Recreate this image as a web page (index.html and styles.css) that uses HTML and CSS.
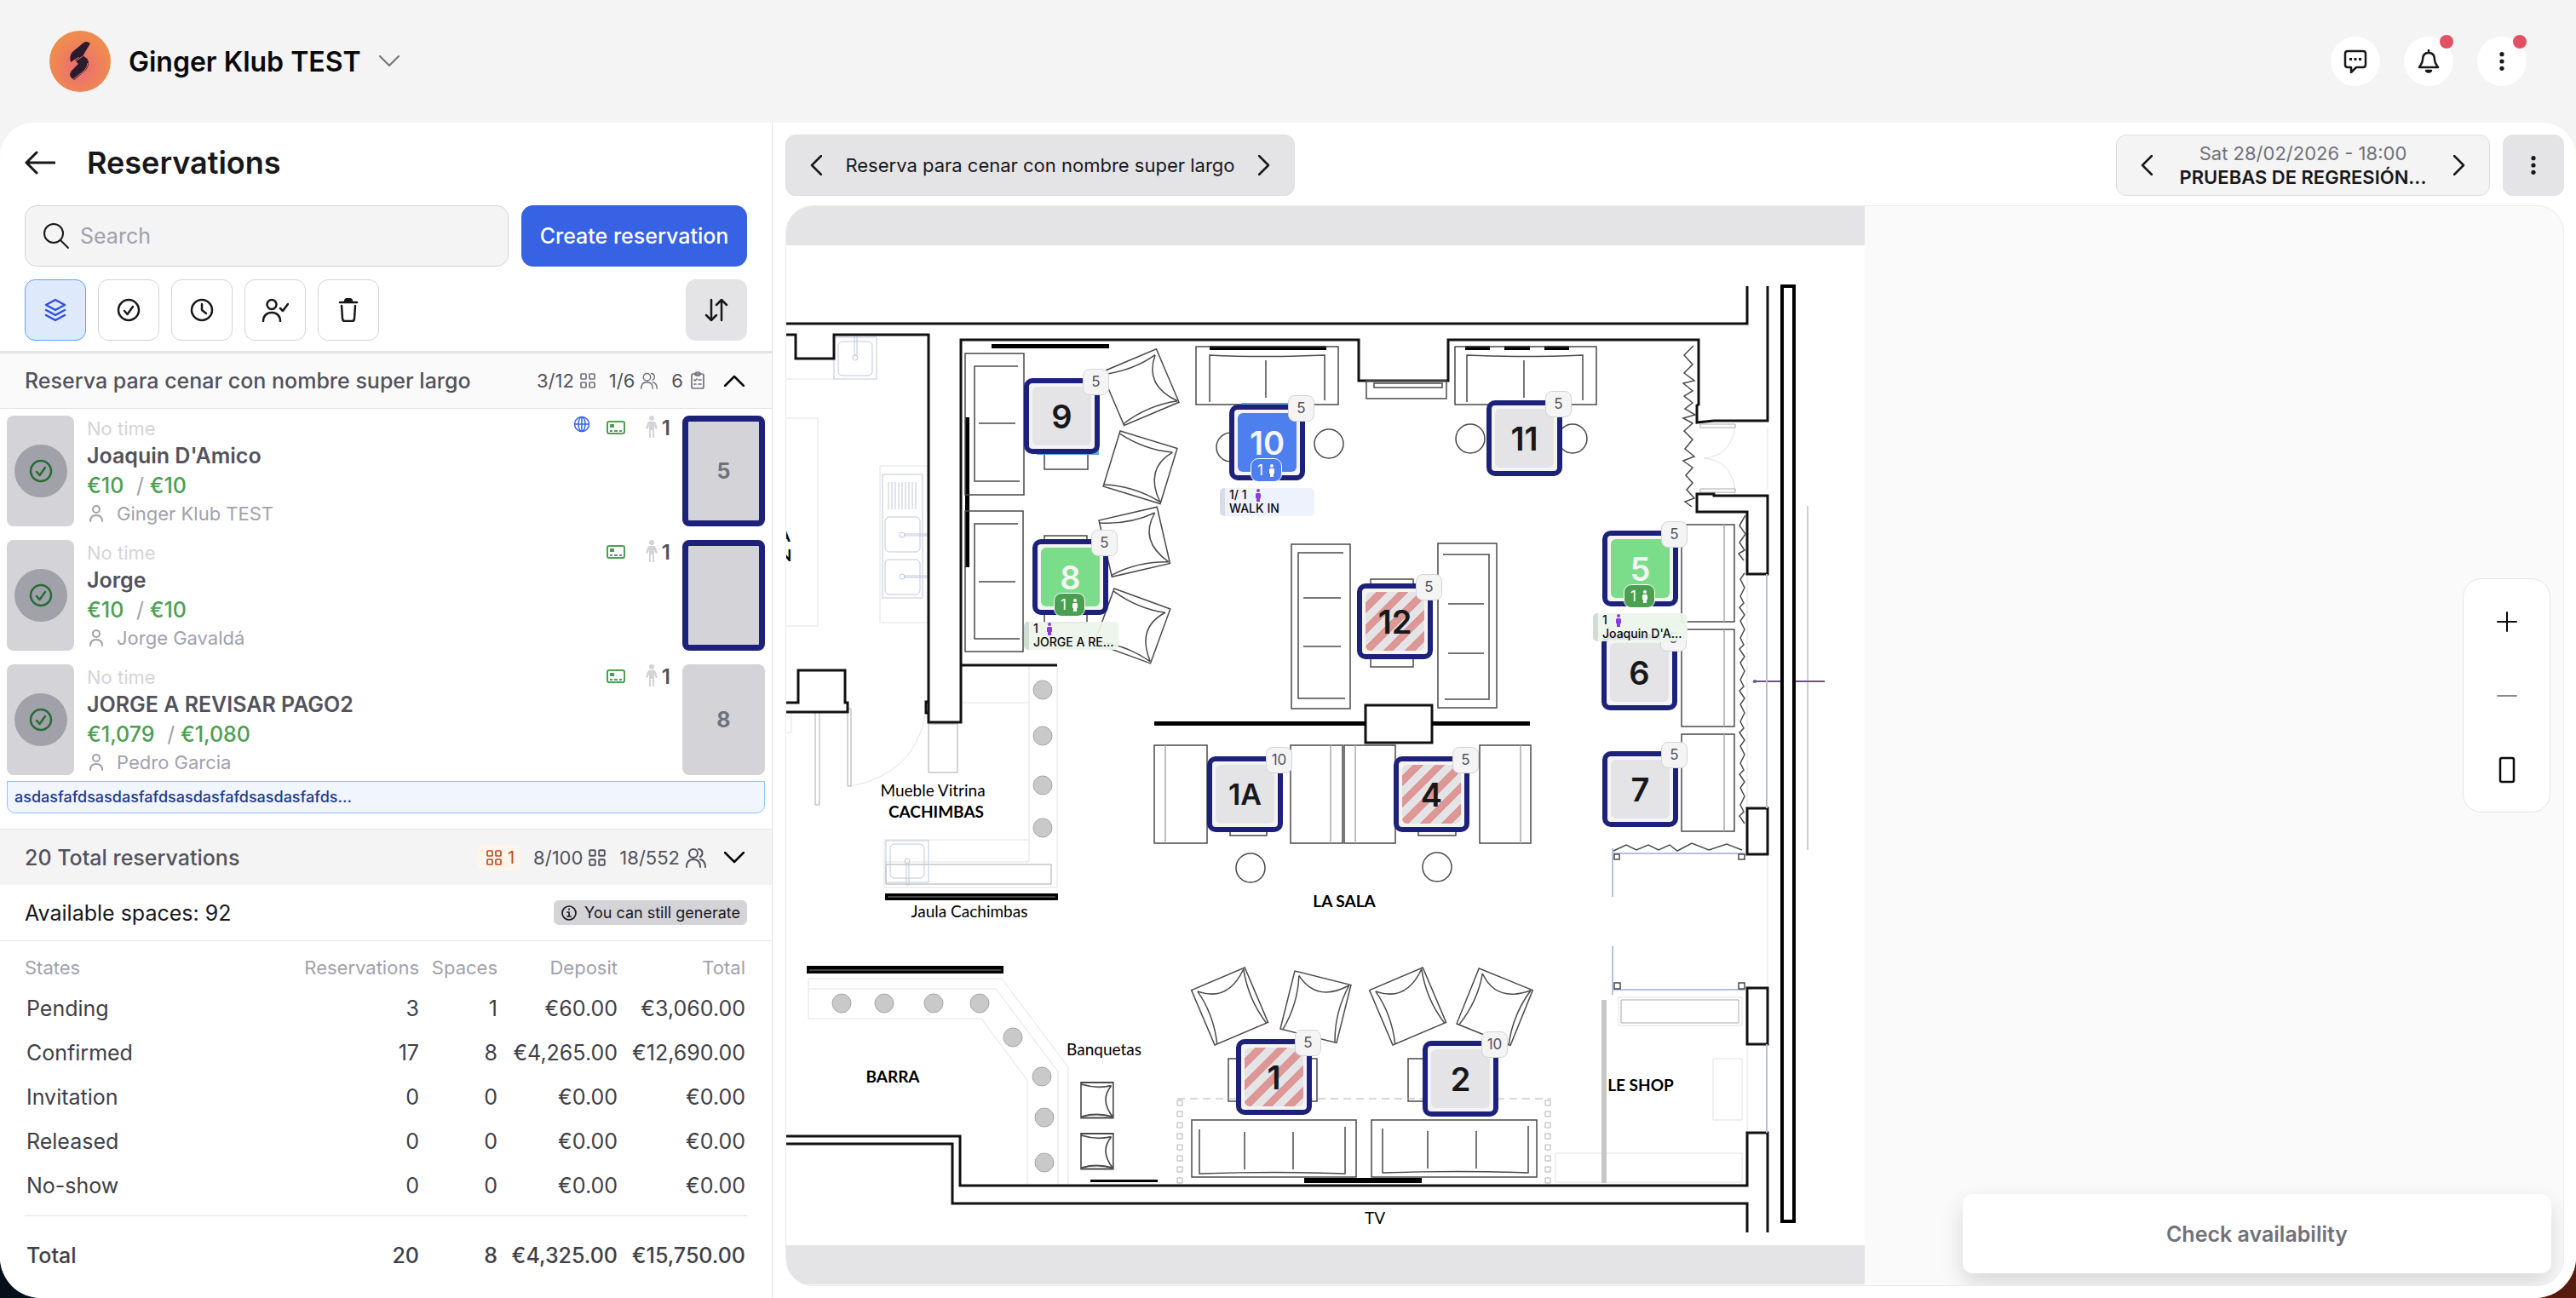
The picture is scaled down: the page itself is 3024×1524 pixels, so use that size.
FILE: index.html
```html
<!DOCTYPE html>
<html lang="en">
<head>
    <meta charset="UTF-8">
    <meta name="viewport" content="width=device-width, initial-scale=1.0">
    <title>Reservations</title>
    <link rel="stylesheet" href="styles.css">
</head>
<body>
    <!-- icon set -->
    <svg class="sprite" aria-hidden="true">
        <symbol id="i-down" viewBox="0 0 24 14"><path d="M1 1l11 11L23 1"/></symbol>
        <symbol id="i-up" viewBox="0 0 24 14"><path d="M1 13L12 2l11 11"/></symbol>
        <symbol id="i-left" viewBox="0 0 14 24"><path d="M13 1L2 12l11 11"/></symbol>
        <symbol id="i-right" viewBox="0 0 14 24"><path d="M1 1l11 11L1 23"/></symbol>
        <symbol id="i-back" viewBox="0 0 36 28"><path d="M14 2L2 14l12 12M2 14h33"/></symbol>
        <symbol id="i-search" viewBox="0 0 32 32"><circle cx="13" cy="13" r="11"/><path d="M21 21l9 9"/></symbol>
        <symbol id="i-layers" viewBox="0 0 28 28"><path d="M14 2l11 6-11 6L3 8z"/><path d="M3 14l11 6 11-6M3 20l11 6 11-6"/></symbol>
        <symbol id="i-check" viewBox="0 0 28 28"><circle cx="14" cy="14" r="12"/><path d="M9 15l3.500 4L19 10"/></symbol>
        <symbol id="i-clock" viewBox="0 0 28 28"><circle cx="14" cy="14" r="12"/><path d="M14 7v7l5 4"/></symbol>
        <symbol id="i-usercheck" viewBox="0 0 32 28"><circle cx="12" cy="7.500" r="5.500"/><path d="M2 27c0-6 4-10 10-10s10 4 10 10M22 12l3 3 6-8"/></symbol>
        <symbol id="i-trash" viewBox="0 0 28 28"><path d="M4 5h20M6 9l1 15q0 3 3 3h8q3 0 3-3l1-15"/><path d="M10 4q0-3 3-3h2q3 0 3 3z" fill="currentColor"/></symbol>
        <symbol id="i-sort" viewBox="0 0 28 28"><path d="M8 2v24M2 20l6 6 6-6M20 26V2M14 8l6-6 6 6"/></symbol>
        <symbol id="i-grid" viewBox="0 0 20 20"><rect x="2" y="2" width="6" height="6" rx="1"/><rect x="12" y="2" width="6" height="6" rx="1"/><rect x="2" y="12" width="6" height="6" rx="1"/><rect x="12" y="12" width="6" height="6" rx="1"/></symbol>
        <symbol id="i-users" viewBox="0 0 26 24"><circle cx="10" cy="7" r="5"/><path d="M2 23c0-6 3-9 8-9s8 3 8 9M16 2c5 0 6 7 2 9M18 14c4 1 6 4 6 9"/></symbol>
        <symbol id="i-clip" viewBox="0 0 18 22"><rect x="2" y="3" width="14" height="17" rx="2"/><path d="M6 3q0-2 3-2t3 2-3 2-3-2zM5 10l1 1 2-2M10 10h3M5 15h2M10 15h3"/></symbol>
        <symbol id="i-globe" viewBox="0 0 20 20"><circle cx="10" cy="10" r="8.500"/><ellipse cx="10" cy="10" rx="4" ry="8.500"/><path d="M2 10h16M10 2v16"/></symbol>
        <symbol id="i-card" viewBox="0 0 24 18"><rect x="2" y="2" width="20" height="14" rx="2"/><path d="M5 5h5v4H5zM5 12h3v2H5zM10 12h4v2h-4zM16 12h3v2h-3z" fill="currentColor" stroke="none"/></symbol>
        <symbol id="i-person" viewBox="0 0 16 26"><g fill="currentColor" stroke="none"><circle cx="8" cy="3" r="3"/><path d="M5 7h6q1 0 2 2l2 6-2 1-2-4v14H9v-9H7v9H5V12l-2 4-2-1 2-6q1-2 2-2z"/></g></symbol>
        <symbol id="i-body" viewBox="0 0 8 15"><g fill="currentColor" stroke="none"><circle cx="4" cy="2" r="2"/><path d="M2 5h4l1 1v5H6v4H2v-4H1V6z"/></g></symbol>
        <symbol id="i-user" viewBox="0 0 18 20"><circle cx="9" cy="5" r="4"/><path d="M2 19c0-5 3-7 7-7s7 2 7 7"/></symbol>
        <symbol id="i-info" viewBox="0 0 20 20"><circle cx="10" cy="10" r="8"/><path d="M8 9h2v5M8 14h4M10 5v1"/></symbol>
        <symbol id="i-chat" viewBox="0 0 28 28"><path d="M5 2h18q3 0 3 3v13q0 3-3 3h-8l-6 6v-6H5q-3 0-3-3V5q0-3 3-3z"/><path d="M7 10h3v3H7zM12.500 10h3v3h-3zM18 10h3v3h-3z" fill="currentColor" stroke="none"/></symbol>
        <symbol id="i-bell" viewBox="0 0 28 28"><path d="M14 4c-5 0-7 3-7 8 0 4-2 6-4 9h22c-2-3-4-5-4-9 0-5-2-8-7-8zM14 1v3"/><path d="M11 25h6q-3 3-6 0z" fill="currentColor"/></symbol>
        <symbol id="i-dots" viewBox="0 0 28 28"><g fill="currentColor" stroke="none"><circle cx="14" cy="5" r="2.800"/><circle cx="14" cy="14" r="2.800"/><circle cx="14" cy="23" r="2.800"/></g></symbol>
        <symbol id="i-plus" viewBox="0 0 24 24"><path d="M1 12h22M12 1v22"/></symbol>
        <symbol id="i-minus" viewBox="0 0 24 24"><path d="M1 12h22"/></symbol>
        <symbol id="i-phone" viewBox="0 0 20 32"><rect x="2" y="2" width="16" height="28" rx="2"/></symbol>
    </svg>

    <header class="topbar">
        <button class="brand">
            <svg class="logo" viewBox="0 0 72 72">
                <defs>
                    <radialGradient id="glow" cy="60%">
                        <stop offset="0" stop-color="#eb6a76"/>
                        <stop offset="1" stop-color="#ef8b4f"/>
                    </radialGradient>
                </defs>
                <circle cx="36" cy="36" r="36" fill="url(#glow)"/>
                <path d="M39 15q4-4 9 0l-9 15-3 2-2-1-9 6q-2-7 2-12z" fill="#2b1b2e"/>
                <path d="M30 35l8-6q8 3 8 9 0 5-4 9L29 58q-8-5-3-11l8-8z" fill="#2b1b2e"/>
                <path d="M28 38l11-8M45 38q0 4-4 9l-13 10" fill="none" stroke="#ec7468" stroke-width="1"/>
            </svg>
            <span>Ginger Klub TEST</span>
            <svg class="icon chev"><use href="#i-down"/></svg>
        </button>
        <div class="top-actions">
            <button class="round" aria-label="Messages"><svg class="icon md"><use href="#i-chat"/></svg></button>
            <button class="round" aria-label="Notifications"><svg class="icon md"><use href="#i-bell"/></svg><span class="dot"></span></button>
            <button class="round" aria-label="More"><svg class="icon dots"><use href="#i-dots"/></svg><span class="dot"></span></button>
        </div>
    </header>

    <main class="panel">
        <aside class="sidebar">
            <div class="title-row">
                <button class="back" aria-label="Back"><svg class="icon"><use href="#i-back"/></svg></button>
                <h1>Reservations</h1>
            </div>
            <div class="search-row">
                <label class="search">
                    <svg class="icon"><use href="#i-search"/></svg>
                    <input type="text" placeholder="Search" aria-label="Search">
                </label>
                <button class="create">Create reservation</button>
            </div>
            <div class="filters">
                <button class="filter active" aria-label="All"><svg class="icon md"><use href="#i-layers"/></svg></button>
                <button class="filter" aria-label="Confirmed"><svg class="icon md"><use href="#i-check"/></svg></button>
                <button class="filter" aria-label="Pending"><svg class="icon md"><use href="#i-clock"/></svg></button>
                <button class="filter" aria-label="Arrived"><svg class="icon wide"><use href="#i-usercheck"/></svg></button>
                <button class="filter" aria-label="Deleted"><svg class="icon md"><use href="#i-trash"/></svg></button>
                <button class="filter sort" aria-label="Sort"><svg class="icon md"><use href="#i-sort"/></svg></button>
            </div>
            <div class="group">
                <h2>Reserva para cenar con nombre super largo</h2>
                <div class="counts">
                    <span class="count">3/12 <svg class="icon sm"><use href="#i-grid"/></svg></span>
                    <span class="count">1/6 <svg class="icon mid"><use href="#i-users"/></svg></span>
                    <span class="count">6 <svg class="icon mid"><use href="#i-clip"/></svg></span>
                </div>
                <button class="toggle" aria-label="Collapse"><svg class="icon chev"><use href="#i-up"/></svg></button>
            </div>

            <div class="list">
                <article class="booking">
                    <div class="state"><span><svg class="icon md"><use href="#i-check"/></svg></span></div>
                    <div class="info">
                        <p class="time">No time</p>
                        <p class="name">Joaquin D'Amico</p>
                        <p class="money">€10 <i>/</i> €10</p>
                        <p class="by"><svg class="icon"><use href="#i-user"/></svg>Ginger Klub TEST</p>
                    </div>
                    <div class="tags">
                        <svg class="icon globe"><use href="#i-globe"/></svg>
                        <svg class="icon card"><use href="#i-card"/></svg>
                        <svg class="icon person"><use href="#i-person"/></svg>
                        <b>1</b>
                    </div>
                    <div class="seat framed">5</div>
                </article>
                <article class="booking">
                    <div class="state"><span><svg class="icon md"><use href="#i-check"/></svg></span></div>
                    <div class="info">
                        <p class="time">No time</p>
                        <p class="name">Jorge</p>
                        <p class="money">€10 <i>/</i> €10</p>
                        <p class="by"><svg class="icon"><use href="#i-user"/></svg>Jorge Gavaldá</p>
                    </div>
                    <div class="tags">
                        <svg class="icon card"><use href="#i-card"/></svg>
                        <svg class="icon person"><use href="#i-person"/></svg>
                        <b>1</b>
                    </div>
                    <div class="seat framed"></div>
                </article>
                <article class="booking">
                    <div class="state"><span><svg class="icon md"><use href="#i-check"/></svg></span></div>
                    <div class="info">
                        <p class="time">No time</p>
                        <p class="name">JORGE A REVISAR PAGO2</p>
                        <p class="money">€1,079 <i>/</i> €1,080</p>
                        <p class="by"><svg class="icon"><use href="#i-user"/></svg>Pedro Garcia</p>
                    </div>
                    <div class="tags">
                        <svg class="icon card"><use href="#i-card"/></svg>
                        <svg class="icon person"><use href="#i-person"/></svg>
                        <b>1</b>
                    </div>
                    <div class="seat">8</div>
                    <p class="note">asdasfafdsasdasfafdsasdasfafdsasdasfafds...</p>
                </article>
            </div>

            <section class="summary">
                <div class="totals">
                    <h2>20 Total reservations</h2>
                    <div class="counts">
                        <span class="count warn"><svg class="icon sm"><use href="#i-grid"/></svg> 1</span>
                        <span class="count">8/100 <svg class="icon mid"><use href="#i-grid"/></svg></span>
                        <span class="count">18/552 <svg class="icon big"><use href="#i-users"/></svg></span>
                    </div>
                    <button class="toggle" aria-label="Expand"><svg class="icon chev"><use href="#i-down"/></svg></button>
                </div>
                <div class="available">
                    <p>Available spaces: 92</p>
                    <span class="chip"><svg class="icon sm"><use href="#i-info"/></svg>You can still generate</span>
                </div>
                <table class="states">
                    <colgroup><col><col class="c-res"><col class="c-spaces"><col class="c-deposit"><col class="c-total"></colgroup>
                    <thead>
                        <tr><th>States</th><th>Reservations</th><th>Spaces</th><th>Deposit</th><th>Total</th></tr>
                    </thead>
                    <tbody>
                        <tr><td>Pending</td><td>3</td><td>1</td><td>€60.00</td><td>€3,060.00</td></tr>
                        <tr><td>Confirmed</td><td>17</td><td>8</td><td>€4,265.00</td><td>€12,690.00</td></tr>
                        <tr><td>Invitation</td><td>0</td><td>0</td><td>€0.00</td><td>€0.00</td></tr>
                        <tr><td>Released</td><td>0</td><td>0</td><td>€0.00</td><td>€0.00</td></tr>
                        <tr><td>No-show</td><td>0</td><td>0</td><td>€0.00</td><td>€0.00</td></tr>
                    </tbody>
                    <tfoot>
                        <tr><td>Total</td><td>20</td><td>8</td><td>€4,325.00</td><td>€15,750.00</td></tr>
                    </tfoot>
                </table>
            </section>
        </aside>

        <section class="stage">
            <div class="stage-bar">
                <div class="zone-nav">
                    <button aria-label="Previous zone"><svg class="icon arrow"><use href="#i-left"/></svg></button>
                    <span>Reserva para cenar con nombre super largo</span>
                    <button aria-label="Next zone"><svg class="icon arrow"><use href="#i-right"/></svg></button>
                </div>
                <div class="date-nav">
                    <button aria-label="Previous date"><svg class="icon arrow"><use href="#i-left"/></svg></button>
                    <p><span>Sat 28/02/2026 - 18:00</span><strong>PRUEBAS DE REGRESIÓN...</strong></p>
                    <button aria-label="Next date"><svg class="icon arrow"><use href="#i-right"/></svg></button>
                </div>
                <button class="menu" aria-label="Options"><svg class="icon dots"><use href="#i-dots"/></svg></button>
            </div>

            <div class="map">
                <div class="canvas">
                    <svg class="plan" viewBox="923 242 1266 1266">
                        <defs>
                            <g id="armchair">
                                <path d="M0 0H70V68H0z" fill="#fff"/>
                                <path d="M66 6Q40 34 69 66M66 6Q34 13 0 3M69 66Q34 57 0 66"/>
                            </g>
                        </defs>
                        <rect x="923" y="242" width="1266" height="1266" fill="#fff"/>
                        <path d="M923 242h1266v46H923zM923 1462h1266v46H923z" fill="#e4e4e6"/>

                        <!-- counters and doors -->
                        <g class="faint">
                            <path d="M923 445h56M923 491h37v244h-37M923 860h6v-24M1033 547h57v184h-57z"/>
                            <path d="M1208 781v205H1038v56h203V781M1128 825h80M1208 986v26h-170"/>
                            <path d="M949 1149h227l78 104v138M949 1149v47h203l54 72v123M949 1161h220l73 97v133"/>
                            <path d="M999 923q75-15 87-83M2037 502q-6 34-37 36 31 2 37 36"/>
                            <path d="M2051 674v275M2075 502v72M2075 1003v157M2051 1226v104M1900 1171h145v33h-145zM2011 1243h34v72h-34zM1826 1354h219v34h-219z"/>
                        </g>
                        <g class="grey">
                            <path d="M957 836h5v109h-5zM995 832h4v91h-4zM1090 850h34v57h-34zM1040 1015h194v23h-194z"/>
                            <path d="M1996 498h41v4h-41zM1996 574h41v4h-41zM1903 1174h138v27h-138z"/>
                        </g>
                        <g class="sink">
                            <rect x="979" y="396" width="50" height="49"/><rect x="984" y="401" width="40" height="40" rx="5"/>
                            <path d="M1003 393v24h3v-24"/><circle cx="1004" cy="420" r="3"/>
                            <rect x="1036" y="557" width="47" height="145"/>
                            <path d="M1043 566v32M1047 566v32M1051 566v32M1055 566v32M1059 566v32M1063 566v32M1067 566v32M1071 566v32M1075 566v32"/>
                            <rect x="1039" y="607" width="41" height="41" rx="5"/><rect x="1039" y="657" width="41" height="41" rx="5"/>
                            <circle cx="1059" cy="628" r="3"/><circle cx="1059" cy="677" r="3"/>
                            <path d="M1062 627h28v2h-28zM1062 676h28v2h-28z"/>
                            <rect x="1040" y="987" width="50" height="49"/><rect x="1045" y="991" width="40" height="40" rx="5"/>
                            <circle cx="1065" cy="1011" r="3"/><path d="M1064 1014v25h3v-25"/>
                        </g>

                        <!-- walls -->
                        <g class="wall">
                            <path d="M923 380h1128v-44"/>
                            <path d="M2075 336v158h-63l-20 2v-20l2-1v-76h-294v48h-105v-48H1128v449h-38V393H979v28h-45v-28h-11"/>
                            <path d="M1090 824h-3v13h3M923 825h14v-38h55v38h3v11h-72M1128 781h113"/>
                            <path d="M1992 580h20v2h63v92h-24v-73h-59zM2051 949h24v54h-24zM2051 1160h24v66h-24z"/>
                            <path d="M2075 1447v-117h-24v62H1127v-58H923M923 1343h195v70h933v34"/>
                            <rect x="1603" y="828" width="78" height="44"/>
                        </g>
                        <path d="M2092 336h14v1098h-14z" fill="#fff" stroke="#000" stroke-width="4"/>
                        <path d="M1164 404h138v5h-138zM1133 490h5v176h-5zM1420 406h137v5h-137zM1720 406h29v5h-29zM1766 406h30v5h-30zM1813 406h29v5h-29zM1355 847h248v5h-248zM1681 847h115v5h-115zM1531 1383h138v6h-138zM1280 1385h79v3h-79zM1039 1049h203v8h-203zM947 1134h231v9H947z"/>
                        <path d="M1042 1053h197M950 1139h225" stroke="#888"/>
                        <path d="M1880 1174h6v215h-6z" fill="#c6c6c6"/>
                        <path d="M2122 594v404" stroke="#cfcfd2" stroke-width="2"/>
                        <path d="M2058 800h32M2108 800h34" stroke="#70508c" stroke-width="2"/><circle cx="2060" cy="800" r="2" fill="#70508c"/>
                        <path d="M2074 674v275M2074 1226v104M1893 1002h155M1893 996v57M1893 1111v57M1893 1162h155" fill="none" stroke="#b4c0dd" stroke-width="2"/>

                        <!-- furniture -->
                        <g class="furn">
                            <path d="M1133 415h69v166h-69zM1195 430h-51v135h53M1149 497h43"/>
                            <path d="M1133 600h68v165h-68zM1195 615h-51v135h53M1149 683h43"/>
                            <path d="M1404 407h167v68h-167zM1420 472v-55q60 3 135 0v53M1486 423v44"/>
                            <path d="M1708 407h166v68h-166zM1722 472v-55q60 3 136 0v53M1789 423v44"/>
                            <path d="M1604 447h94v21h-94zM1613 450h80v5h-80z"/>
                            <path d="M1516 639h69v193h-69zM1577 649h-53v171h55M1530 702h44M1530 759h44"/>
                            <path d="M1688 638h69v193h-69zM1694 651h54v170h-52M1700 709h42M1700 767h42"/>
                            <path d="M1609 680h50v103h-50zM1226 500h51v51h-51zM1226 629h50v102h-50z"/>
                            <path d="M1355 875h62v115h-62zM1515 875h61v115h-61zM1578 875h60v115h-60zM1737 875h60v115h-60z"/>
                            <path d="M1444 970h43v11h-43zM1665 970h44v11h-44zM1442 1243h104v50h-104zM1653 1243h60v50h-60z"/>
                            <path d="M1974 616h62v114h-62zM1974 739h62v114h-62zM1974 862h62v114h-62z"/>
                            <path d="M1399 1315h193v67h-193zM1408 1326v52q90-3 171 0v-55M1461 1329v44M1518 1329v44"/>
                            <path d="M1610 1315h194v67h-194zM1623 1325v52q90-3 171 0v-55M1676 1328v44M1733 1328v44"/>
                            <path d="M1368 875v115M1562 875v115M1591 875v115M1785 875v115M2024 616v114M2024 739v114M2024 862v114" stroke="#aaa"/>
                            <circle cx="1445" cy="525" r="17"/><circle cx="1560" cy="521" r="17"/>
                            <circle cx="1726" cy="515" r="17"/><circle cx="1846" cy="515" r="17"/>
                            <circle cx="1468" cy="1019" r="17"/><circle cx="1687" cy="1018" r="17"/>
                            <use href="#armchair" transform="translate(1293 437) rotate(-23)"/>
                            <use href="#armchair" transform="translate(1315 506) rotate(17)"/>
                            <use href="#armchair" transform="translate(1290 611) rotate(-13)"/>
                            <use href="#armchair" transform="translate(1308 691) rotate(20)"/>
                            <use href="#armchair" transform="translate(1426 1227) rotate(-113)"/>
                            <use href="#armchair" transform="translate(1503 1208) rotate(-76)"/>
                            <use href="#armchair" transform="translate(1635 1227) rotate(-113)"/>
                            <use href="#armchair" transform="translate(1710 1202) rotate(-68)"/>
                            <g stroke-width="3">
                                <use href="#armchair" transform="translate(1269 1271) scale(.54 .61)"/>
                                <use href="#armchair" transform="translate(1269 1331) scale(.54 .61)"/>
                            </g>
                            <path d="M1895 1003h6v6h-6zM2041 1003h7v6h-7zM1895 1154h7v7h-7zM2041 1154h7v7h-7z"/>
                        </g>
                        <!-- curtains -->
                        <g class="furn">
                            <path d="M1988 406l-11 11 10 11-10 10 12 9-13 3 11 9-10 6 10 8-9 7 12 7-14 4 11 6-10 9 10 10-9 11 11 9-13 5 11 8-8 9 8 9-7 8 9 10-11 4 8 6"/>
                            <path d="M2049 605l-7 12 7 10-7 10 6 9-7 4 6 8M2048 673l-5 7 5 10-5 10 4 8-5 5 6 9-5 7 5 10-5 10 4 8-5 5 6 9-5 7 5 10-5 10 4 8-5 5 6 9-5 7 5 10-5 10 4 8-5 5 6 9-5 7 5 10-5 10 4 8-5 5 6 9-5 7 5 10-5 10 4 8-5 5 6 9"/>
                            <path d="M1894 999l15-7 12 6 14-6 12 6 13-6 9 7 17-9 20 8 21-7 18 7"/>
                        </g>
                        <g class="rug">
                            <path d="M1382 1290h439" stroke-dasharray="9 6"/>
                            <path d="M1382 1292h6v6h-6zm0 13h6v6h-6zm0 13h6v6h-6zm0 13h6v6h-6zm0 13h6v6h-6zm0 13h6v6h-6zm0 13h6v6h-6zm0 13h6v6h-6z"/>
                            <path d="M1814 1292h6v6h-6zm0 13h6v6h-6zm0 13h6v6h-6zm0 13h6v6h-6zm0 13h6v6h-6zm0 13h6v6h-6zm0 13h6v6h-6zm0 13h6v6h-6z"/>
                        </g>
                        <g class="stools">
                            <circle cx="1224" cy="810" r="11"/><circle cx="1224" cy="864" r="11"/><circle cx="1224" cy="922" r="11"/><circle cx="1224" cy="972" r="11"/>
                            <circle cx="988" cy="1178" r="11"/><circle cx="1038" cy="1178" r="11"/><circle cx="1096" cy="1178" r="11"/><circle cx="1150" cy="1178" r="11"/>
                            <circle cx="1189" cy="1218" r="11"/><circle cx="1223" cy="1264" r="11"/><circle cx="1226" cy="1312" r="11"/><circle cx="1226" cy="1365" r="11"/>
                        </g>
                        <path d="M1217 480h73v54h-73zM1457 473h60v10h-60z" fill="#5ba6d6"/>

                        <g class="plan-text">
                            <text x="1095" y="935">Mueble Vitrina</text>
                            <text x="1099" y="960" class="strong">CACHIMBAS</text>
                            <text x="1138" y="1077">Jaula Cachimbas</text>
                            <text x="1048" y="1271" class="strong">BARRA</text>
                            <text x="1296" y="1239">Banquetas</text>
                            <text x="1578" y="1065" class="strong">LA SALA</text>
                            <text x="1926" y="1281" class="strong">LE SHOP</text>
                            <text x="1614" y="1437">TV</text>
                            <text x="921" y="636" class="strong">A</text>
                            <text x="922" y="659" class="strong">N</text>
                        </g>
                    </svg>

                    <button class="table t9"><b>9</b><i>5</i></button>
                    <button class="table t10 walkin"><b>10</b><i>5</i><em>1<svg><use href="#i-body"/></svg></em></button>
                    <button class="table t11"><b>11</b><i>5</i></button>
                    <button class="table t8 seated"><b>8</b><i>5</i><em>1<svg><use href="#i-body"/></svg></em></button>
                    <button class="table t12 blocked"><b>12</b><i>5</i></button>
                    <button class="table t6"><b>6</b><i>5</i></button>
                    <button class="table t5 seated"><b>5</b><i>5</i><em>1<svg><use href="#i-body"/></svg></em></button>
                    <button class="table t7"><b>7</b><i>5</i></button>
                    <button class="table t1a"><b class="long">1A</b><i>10</i></button>
                    <button class="table t4 blocked"><b>4</b><i>5</i></button>
                    <button class="table t1 blocked"><b>1</b><i>5</i></button>
                    <button class="table t2"><b>2</b><i>10</i></button>

                    <div class="tip tip10"><span>1/ 1 <svg><use href="#i-body"/></svg></span><span>WALK IN</span></div>
                    <div class="tip green tip8"><span>1 <svg><use href="#i-body"/></svg></span><span>JORGE A RE...</span></div>
                    <div class="tip green tip5"><span>1 <svg><use href="#i-body"/></svg></span><span>Joaquin D'A...</span></div>
                </div>

                <div class="zoom">
                    <button aria-label="Zoom in"><svg class="icon"><use href="#i-plus"/></svg></button>
                    <button aria-label="Zoom out" disabled><svg class="icon"><use href="#i-minus"/></svg></button>
                    <button aria-label="Rotate"><svg class="icon phone"><use href="#i-phone"/></svg></button>
                </div>
                <button class="availability">Check availability</button>
            </div>
        </section>
    </main>
</body>
</html>
```
FILE: styles.css
```css
* {
    box-sizing: border-box;
}
html {
    background: linear-gradient(90deg, #06101a 50%, #571a0e 50%);
}
body {
    margin: 0;
    height: 100vh;
    display: flex;
    flex-direction: column;
    overflow: hidden;
    background: #f4f4f4;
    border-radius: 0 0 48px 48px;
    font-family: Inter, "Liberation Sans", sans-serif;
    font-size: 25px;
    color: #18181b;
}
h1, h2, p {
    margin: 0;
}
button {
    font: inherit;
    color: inherit;
    border: 0;
    padding: 0;
    background: none;
    display: flex;
    align-items: center;
    justify-content: center;
}
.sprite {
    position: absolute;
    width: 0;
    height: 0;
}
.icon {
    flex: none;
    width: 24px;
    height: 24px;
    fill: none;
    stroke: currentColor;
    stroke-width: 2;
    stroke-linecap: round;
    stroke-linejoin: round;
}
.icon.md {
    width: 28px;
    height: 28px;
    stroke-width: 2.5;
}
.icon.wide {
    width: 32px;
    height: 28px;
    stroke-width: 2.5;
}
.icon.sm {
    width: 20px;
    height: 20px;
    stroke-width: 1.7;
}
.icon.mid {
    width: 22px;
    height: 22px;
    stroke-width: 1.7;
}
.icon.big {
    width: 26px;
    height: 24px;
}
.icon.dots {
    width: 26px;
    height: 26px;
}
.icon.chev {
    height: 14px;
}
.icon.arrow {
    width: 14px;
    height: 24px;
    stroke-width: 2.5;
}

/* top bar */
.topbar {
    height: 144px;
    padding: 0 58px;
    display: flex;
    align-items: center;
    justify-content: space-between;
}
.brand {
    gap: 21px;
    font-size: 32px;
    font-weight: 600;
    color: #09090b;
}
.brand .chev {
    color: #71717a;
}
.logo {
    width: 72px;
    height: 72px;
}
.top-actions {
    display: flex;
    gap: 28px;
}
.round {
    position: relative;
    width: 58px;
    height: 58px;
    border-radius: 50%;
    background: #fff;
}
.dot {
    position: absolute;
    top: -2px;
    right: 0;
    width: 16px;
    height: 16px;
    border-radius: 50%;
    background: #e25064;
}

/* sidebar */
.panel {
    flex: 1;
    min-height: 0;
    display: flex;
    background: #fff;
    border-radius: 40px 40px 0 0;
    overflow: hidden;
}
.sidebar {
    width: 907px;
    flex: none;
    display: flex;
    flex-direction: column;
    border-right: 1px solid #e4e4e7;
}
.title-row {
    height: 97px;
    padding: 0 29px 4px;
    display: flex;
    align-items: center;
    gap: 37px;
}
.back .icon {
    width: 36px;
    height: 28px;
    stroke-width: 3;
}
h1 {
    font-size: 36px;
    font-weight: 600;
}
.search-row {
    padding: 0 29px;
    display: flex;
    gap: 15px;
}
.search {
    flex: 1;
    height: 72px;
    padding: 0 20px;
    display: flex;
    align-items: center;
    gap: 12px;
    border: 1px solid #d4d4d8;
    border-radius: 14px;
    background: #f4f4f4;
}
.search .icon {
    width: 32px;
    height: 32px;
}
.search input {
    flex: 1;
    border: 0;
    outline: 0;
    padding: 0;
    background: none;
    font: inherit;
}
.search input::placeholder {
    color: #a1a1aa;
}
.create {
    width: 265px;
    border-radius: 14px;
    background: #3662e3;
    color: #fff;
    font-weight: 500;
}
.filters {
    padding: 15px 29px 12px;
    display: flex;
    gap: 14px;
    border-bottom: 3px solid #e4e4e7;
}
.filter {
    width: 72px;
    height: 72px;
    border: 1px solid #d4d4d8;
    border-radius: 12px;
}
.filter.active {
    background: #dfe9fc;
    border-color: #62a0f6;
    color: #2b50dc;
}
.filter.sort {
    margin-left: auto;
    border: 0;
    background: #e4e4e6;
}
.group, .totals, .available {
    height: 65px;
    padding: 0 29px;
    display: flex;
    align-items: center;
}
.group {
    background: #fafafa;
    border-bottom: 1px solid #e4e4e7;
    color: #52525b;
}
h2 {
    flex: 1;
    font-size: 25px;
    font-weight: 500;
    color: #52525b;
}
.counts {
    display: flex;
    align-items: center;
    gap: 15px;
    font-size: 22px;
    color: #52525b;
}
.count {
    display: flex;
    align-items: center;
    gap: 6px;
}
.group .count .icon {
    color: #71717a;
}
.toggle {
    margin: 0 3px 0 20px;
    color: #09090b;
}
.toggle .icon {
    stroke-width: 2.5;
}
.list {
    flex: 1;
    min-height: 0;
    overflow: hidden;
    padding: 8px;
    display: flex;
    flex-direction: column;
    gap: 16px;
}
.booking {
    display: grid;
    grid-template-columns: 79px 1fr auto 97px;
    grid-template-rows: 130px;
}
.state {
    display: flex;
    align-items: center;
    justify-content: center;
    background: #d4d4d8;
    border-radius: 8px;
}
.state span {
    width: 62px;
    height: 62px;
    display: flex;
    align-items: center;
    justify-content: center;
    border-radius: 50%;
    background: #a1a1a9;
    color: #256b35;
}
.info {
    padding-left: 15px;
}
.info p {
    height: 35px;
    line-height: 35px;
    white-space: nowrap;
}
.info .time {
    height: 30px;
    line-height: 30px;
    font-size: 22px;
    color: #d4d4d8;
}
.info .name {
    font-weight: 600;
    color: #52525b;
}
.info .money {
    font-weight: 500;
    color: #4aa050;
}
.money i {
    margin-left: 8px;
    font-style: normal;
    font-weight: 400;
    color: #a1a1aa;
}
.info .by {
    height: 30px;
    display: flex;
    align-items: center;
    gap: 15px;
    font-size: 22px;
    color: #a1a1aa;
}
.by .icon {
    width: 18px;
    height: 20px;
    margin-left: 2px;
}
.tags {
    height: 28px;
    padding-right: 14px;
    display: flex;
    align-items: center;
}
.tags b {
    font-size: 24px;
    font-weight: 600;
    color: #52525b;
}
.tags .globe {
    align-self: flex-start;
    width: 20px;
    height: 20px;
    margin-right: 18px;
    stroke-width: 1.5;
    color: #3662e3;
}
.tags .card {
    width: 24px;
    height: 18px;
    margin-right: 22px;
    color: #4aa050;
}
.tags .person {
    align-self: flex-start;
    width: 16px;
    height: 26px;
    margin-right: 4px;
    color: #d4d4d8;
}
.seat {
    display: flex;
    align-items: center;
    justify-content: center;
    border-radius: 8px;
    background: #d4d4d8;
    color: #71717a;
    font-weight: 700;
}
.seat.framed {
    border: 7px solid #1d2179;
}
.note {
    grid-column: 1 / -1;
    height: 38px;
    margin-top: 7px;
    padding: 0 8px;
    line-height: 36px;
    border: 1px solid #93c0fa;
    border-radius: 0 0 10px 10px;
    background: #f1f5fd;
    color: #213a86;
    font-size: 18px;
    font-weight: 500;
}

/* totals */
.totals {
    height: 66px;
    border-top: 1px solid #e4e4e7;
    background: #f4f4f4;
}
.warn {
    height: 30px;
    padding: 0 7px 0 9px;
    border-radius: 6px;
    background: #fff5ea;
    color: #bf4a22;
    font-size: 20px;
}
.available {
    justify-content: space-between;
    height: 66px;
    border-bottom: 1px solid #e4e4e7;
}
.chip {
    height: 29px;
    padding: 0 8px;
    display: flex;
    align-items: center;
    gap: 8px;
    border-radius: 6px;
    background: #d4d4d8;
    font-size: 18px;
}
.states {
    width: 848px;
    margin: 8px 29px 3px;
    border-collapse: collapse;
    table-layout: fixed;
    color: #3f3f46;
}
.c-res {
    width: 165px;
}
.c-spaces {
    width: 92px;
}
.c-deposit {
    width: 141px;
}
.c-total {
    width: 150px;
}
.states th {
    height: 45px;
    padding: 0 2px 0 0;
    font-size: 22px;
    font-weight: 400;
    text-align: right;
    color: #a1a1aa;
}
.states td {
    height: 52px;
    padding: 0 2px;
    text-align: right;
}
.states th:first-child, .states td:first-child {
    text-align: left;
}
.states tbody tr:last-child td {
    height: 61px;
    padding-bottom: 9px;
}
.states tfoot td {
    height: 94px;
    border-top: 1px solid #e4e4e7;
    font-weight: 500;
}

/* stage */
.stage {
    flex: 1;
    min-width: 0;
    padding: 14px 14px 14px 15px;
    display: flex;
    flex-direction: column;
    gap: 11px;
}
.stage-bar {
    display: flex;
    height: 72px;
    gap: 15px;
}
.zone-nav, .date-nav {
    display: flex;
    align-items: center;
    justify-content: space-between;
    border: 1px solid #dedee0;
    border-radius: 12px;
    padding: 0 28px;
}
.zone-nav {
    width: 598px;
    margin-right: auto;
    background: #e4e4e6;
    font-size: 22px;
}
.date-nav {
    width: 439px;
    background: #f4f4f4;
    font-size: 22px;
    line-height: 28px;
    text-align: center;
}
.date-nav span, .date-nav strong {
    display: block;
}
.date-nav span {
    color: #71717a;
}
.date-nav strong {
    font-weight: 600;
}
.menu {
    width: 72px;
    border-radius: 12px;
    background: #e4e4e6;
}
.map {
    position: relative;
    flex: 1;
    min-height: 0;
    overflow: hidden;
    border: 1px solid #ececee;
    border-radius: 32px;
    background: #fafafa;
}
.canvas {
    position: relative;
    width: 1266px;
    height: 1266px;
}
.plan {
    display: block;
    width: 100%;
    height: 100%;
}
.faint, .grey, .sink, .wall, .furn, .rug {
    fill: none;
}
.faint {
    stroke: #e2e2e2;
}
.grey {
    stroke: #aaa;
}
.sink {
    stroke: #c0c7de;
}
.wall {
    stroke: #111;
    stroke-width: 3;
}
.furn {
    stroke: #4a4a4a;
    stroke-width: 1.5;
}
.rug {
    stroke: #b0b0b0;
}
.stools {
    fill: #c9c9c9;
    stroke: #a6a6a6;
}
.plan-text {
    font-family: Lato, "Open Sans", sans-serif;
    font-size: 19px;
    text-anchor: middle;
    fill: #000;
}
.plan-text .strong {
    font-weight: 700;
}

/* tables on the plan */
.table {
    position: absolute;
    width: 89px;
    height: 89px;
    padding: 4px;
    border: 6px solid #1d2179;
    border-radius: 10px;
    background: #f4f4f5;
}
.table b {
    width: 100%;
    height: 100%;
    border-radius: 6px;
    background: #e4e4e6;
    font-size: 38px;
    font-weight: 600;
    line-height: 70px;
}
.table b.long {
    font-size: 34px;
}
.table i {
    position: absolute;
    top: -17px;
    right: -17px;
    width: 31px;
    height: 31px;
    border: 1px solid #d4d4d8;
    border-radius: 8px;
    background: #f4f4f5;
    color: #52525b;
    font-size: 17px;
    font-style: normal;
    line-height: 28px;
}
.table em {
    position: absolute;
    left: 19px;
    bottom: -8px;
    width: 37px;
    height: 28px;
    display: flex;
    align-items: center;
    justify-content: center;
    gap: 6px;
    border: 1px solid #fff;
    border-radius: 9px;
    background: #4d80ee;
    font-size: 17px;
    font-style: normal;
}
.table svg, .tip svg {
    width: 8px;
    height: 15px;
}
.walkin em, .seated em {
    color: #fff;
}
.walkin b {
    background: #4d80ee;
    color: #f4f4f5;
}
.seated b {
    background: #7bdc8a;
    color: #f4f4f5;
}
.seated em {
    background: #4aa050;
}
.blocked b {
    background: repeating-linear-gradient(135deg, #e4e4e6 0 9px, #dc9796 9px 18px);
}
.t9 { left: 279px; top: 202px; }
.t10 { left: 520px; top: 233px; }
.t11 { left: 822px; top: 228px; }
.t8 { left: 289px; top: 391px; }
.t12 { left: 670px; top: 443px; }
.t5 { left: 958px; top: 381px; }
.t6 { left: 957px; top: 503px; }
.t7 { left: 958px; top: 640px; }
.t1a { left: 494px; top: 646px; }
.t4 { left: 713px; top: 646px; }
.t1 { left: 528px; top: 978px; }
.t2 { left: 747px; top: 980px; }
.tip {
    position: absolute;
    width: 111px;
    height: 33px;
    padding-left: 5px;
    border-left: 6px solid #d6dce8;
    border-radius: 5px;
    background: rgba(236, 241, 253, .93);
    color: #09090b;
    font-size: 14px;
    font-weight: 500;
    line-height: 16px;
    white-space: nowrap;
}
.tip.green {
    border-color: #d3dcd3;
    background: rgba(236, 244, 236, .93);
}
.tip span {
    display: flex;
    gap: 9px;
}
.tip svg {
    margin-top: 1px;
    color: #8a3be0;
}
.tip10 { left: 509px; top: 331px; }
.tip8 { left: 279px; top: 488px; }
.tip5 { left: 947px; top: 478px; }

.zoom {
    position: absolute;
    right: 15px;
    top: 437px;
    width: 103px;
    padding: 6px 0;
    border: 1px solid #e4e4e7;
    border-radius: 22px;
    background: #fff;
}
.zoom button {
    width: 100%;
    height: 87px;
    color: #09090b;
}
.zoom button:disabled {
    color: #8a8a8a;
}
.zoom .phone {
    width: 20px;
    height: 32px;
    stroke-width: 2.5;
}
.availability {
    position: absolute;
    right: 14px;
    bottom: 14px;
    width: 691px;
    height: 93px;
    border-radius: 12px;
    background: #fff;
    color: #71717a;
    font-weight: 600;
    box-shadow: 0 12px 28px rgba(0, 0, 0, .14);
}
```
